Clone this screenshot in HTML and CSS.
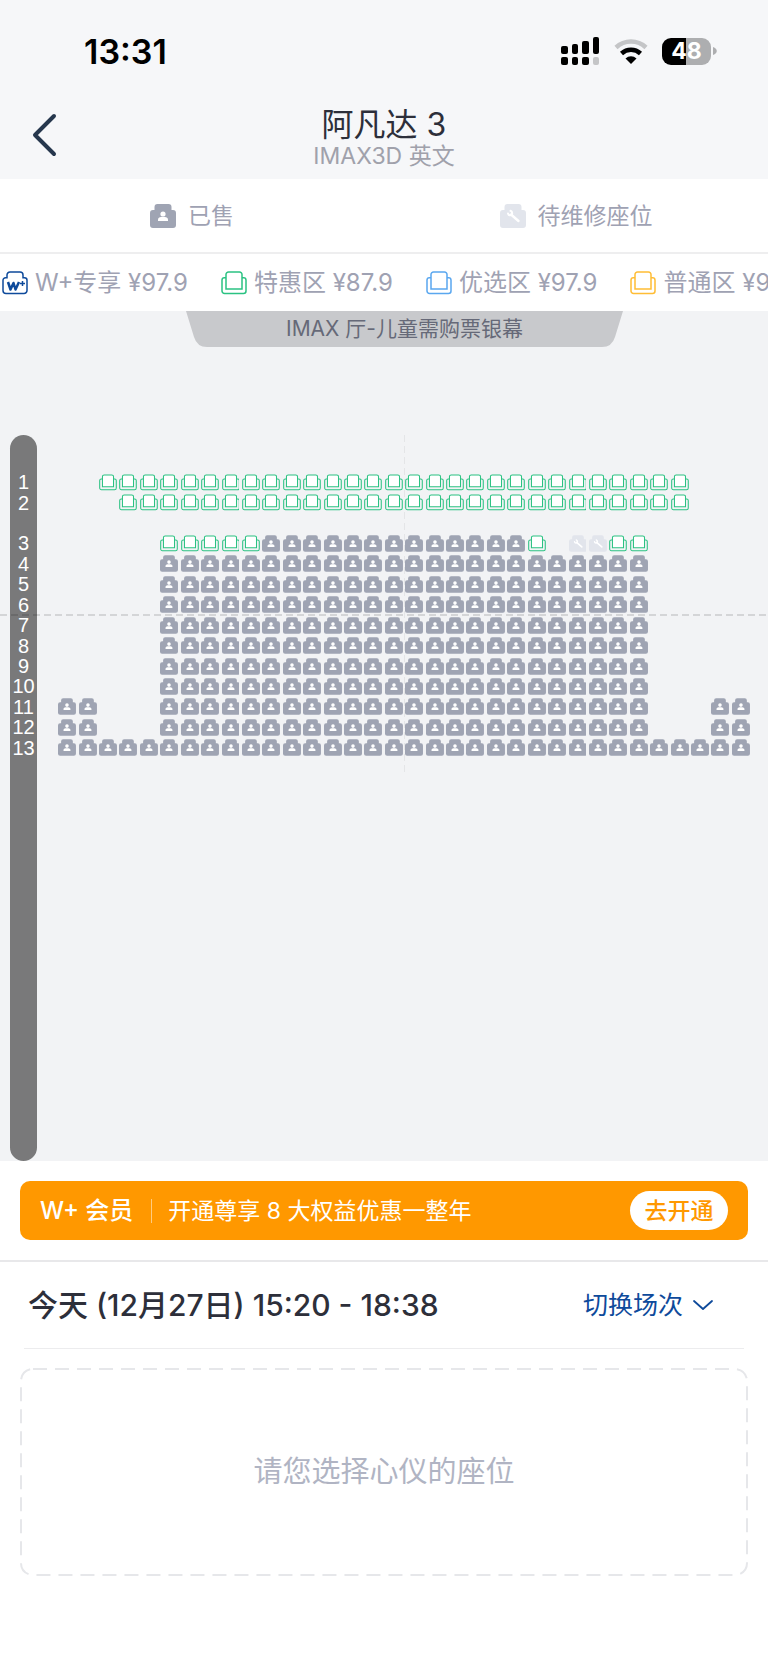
FILE: index.html
```
<!DOCTYPE html>
<html lang="zh-CN">
<head>
    <meta charset="UTF-8">
    <meta name="viewport" content="width=device-width, initial-scale=1">
    <title>选座</title>
    <link rel="stylesheet" href="styles.css">
</head>
<body>
<svg class="sprite" aria-hidden="true">
    <symbol id="seat-sold" viewBox="0 0 26 24">
        <path fill="currentColor" d="M7.500 0h11a3 3 0 0 1 3 3v3H23a3 3 0 0 1 3 3v12a3 3 0 0 1-3 3H3a3 3 0 0 1-3-3V9a3 3 0 0 1 3-3h1.500V3a3 3 0 0 1 3-3z"/>
        <circle cx="13" cy="10" r="2.600" fill="#fff"/>
        <path fill="#fff" d="M8 17v-1.500c0-1.500 1.500-2.200 3-2.500h4c1.500.3 3 1 3 2.500V17z"/>
    </symbol>
    <symbol id="seat-repair" viewBox="0 0 26 24">
        <path fill="currentColor" d="M7.500 0h11a3 3 0 0 1 3 3v3H23a3 3 0 0 1 3 3v12a3 3 0 0 1-3 3H3a3 3 0 0 1-3-3V9a3 3 0 0 1 3-3h1.500V3a3 3 0 0 1 3-3z"/>
        <path fill="none" stroke="#fff" stroke-width="2.400" stroke-linecap="round" d="M11 10.500l7.500 6.500"/>
        <path fill="none" stroke="#fff" stroke-width="2" stroke-linecap="round" d="M8 9.500c.5 2.500 4 2.500 4.200-.3 0-1.200-.7-2-1.700-2.400"/>
    </symbol>
    <symbol id="seat-free" viewBox="0 0 26 24">
        <path fill="none" stroke="currentColor" stroke-width="1.500" d="M5 6.800H3.300A2.300 2.300 0 0 0 1 9v11a2.500 2.500 0 0 0 2.500 2.500h19A2.500 2.500 0 0 0 25 20V9a2.300 2.300 0 0 0-2.300-2.200H21"/>
        <path fill="#fff" stroke="currentColor" stroke-width="1.500" d="M5 18V3.500A2.500 2.500 0 0 1 7.500 1h11A2.500 2.500 0 0 1 21 3.500V18z"/>
    </symbol>
    <symbol id="seat-wplus" viewBox="0 0 26 24">
        <path fill="#fff" stroke="currentColor" stroke-width="1.500" d="M5 6.800V4a3 3 0 0 1 3-3h10a3 3 0 0 1 3 3v2.800h1.500A2.500 2.500 0 0 1 25 9.300v10.200a3 3 0 0 1-3 3H4a3 3 0 0 1-3-3V9.300a2.500 2.500 0 0 1 2.500-2.500z"/>
        <path fill="none" stroke="currentColor" stroke-width="2.500" stroke-linejoin="round" d="M6 11l2.500 7.500 3-6.500 2 6.500 3.500-7.500"/>
        <path fill="none" stroke="currentColor" stroke-width="1.500" d="M18 12.500h5M20.500 10v5"/>
    </symbol>
</svg>

<header class="header">
    <div class="status">
        <span class="time">13:31</span>
        <div class="status-icons">
            <svg width="39" height="28" viewBox="0 0 39 28">
                <rect x="0" y="9" width="7" height="8" rx="2"/>
                <rect x="11" y="7" width="6" height="10" rx="2"/>
                <rect x="21" y="4" width="7" height="13" rx="2"/>
                <rect x="32" y="0" width="6" height="17" rx="2"/>
                <rect x="0" y="20" width="7" height="8" rx="2"/>
                <rect x="11" y="20" width="6" height="8" rx="2"/>
                <rect x="21" y="20" width="7" height="8" rx="2"/>
                <rect x="32" y="20" width="6" height="8" rx="2" fill="#c4c5c7"/>
            </svg>
            <svg width="34" height="26" viewBox="0 0 34 26">
                <path fill="none" stroke="#c4c5c7" stroke-width="4.500" d="M2 9.500a22 22 0 0 1 30 0"/>
                <path fill="none" stroke="#000" stroke-width="4.500" d="M7.500 15.500a14 14 0 0 1 19 0"/>
                <path d="M17 26l-5.500-5.500a8 8 0 0 1 11 0z"/>
            </svg>
            <div class="battery">
                <span class="battery-level">48</span>
                <svg width="4" height="8" viewBox="0 0 4 8"><path fill="#adaeb0" d="M0 0c5 1.500 5 6.500 0 8z"/></svg>
            </div>
        </div>
    </div>
    <div class="nav">
        <button class="back" aria-label="返回">
            <svg width="26" height="44" viewBox="0 0 26 44"><path fill="none" stroke="#26374d" stroke-width="4" stroke-linecap="round" stroke-linejoin="round" d="M23 3L4 22l19 19"/></svg>
        </button>
        <div class="film">
            <h1>阿凡达 3</h1>
            <p>IMAX3D 英文</p>
        </div>
    </div>
</header>

<div class="states">
    <span class="state"><svg class="icon sold"><use href="#seat-sold"/></svg>已售</span>
    <span class="state"><svg class="icon repair"><use href="#seat-repair"/></svg>待维修座位</span>
</div>

<div class="zones">
    <span class="zone"><svg class="icon wplus"><use href="#seat-wplus"/></svg>W+专享 ¥97.9</span>
    <span class="zone"><svg class="icon cheap"><use href="#seat-free"/></svg>特惠区 ¥87.9</span>
    <span class="zone"><svg class="icon best"><use href="#seat-free"/></svg>优选区 ¥97.9</span>
    <span class="zone"><svg class="icon normal"><use href="#seat-free"/></svg>普通区 ¥97.9</span>
</div>

<main class="hall">
    <div class="screen">
        <svg class="screen-shape" viewBox="0 0 437 36" preserveAspectRatio="none"><path fill="#c8c9cc" d="M0 0h437l-8 26q-3 10-13 10H21q-10 0-13-10z"/></svg>
        <span>IMAX 厅-儿童需购票银幕</span>
    </div>
    <div class="map">
        <div class="rows" id="rows"></div>
        <div class="seats" id="seats"></div>
    </div>
    <div class="line-h"></div>
</main>

<section class="vip">
    <div class="banner">
        <strong>W+ 会员</strong>
        <span class="banner-text">开通尊享 8 大权益优惠一整年</span>
        <button class="open">去开通</button>
    </div>
</section>

<section class="session">
    <div class="session-head">
        <h2>今天 (12月27日) 15:20 - 18:38</h2>
        <button class="switch">切换场次
            <svg width="20" height="12" viewBox="0 0 20 12"><path fill="none" stroke="currentColor" stroke-width="1.800" stroke-linecap="round" stroke-linejoin="round" d="M1 2l9 8 9-8"/></svg>
        </button>
    </div>
    <div class="empty">
        <svg class="empty-frame" aria-hidden="true"><rect class="empty-line" x="1" y="1" rx="12"/></svg>
        请您选择心仪的座位
    </div>
</section>

<script src="seats.js"></script>
</body>
</html>
```
FILE: styles.css
```
*{
    box-sizing:border-box;
}
body{
    margin:0;
    background:#fff;
    color:#2d2f3a;
    font-family:Inter,"Noto Sans CJK SC",sans-serif;
}
h1,h2,p{
    margin:0;
    font-weight:400;
}
button{
    padding:0;
    border:0;
    background:none;
    font-family:inherit;
}
svg{
    display:block;
    flex:none;
}
.sprite{
    position:absolute;
    width:0;
    height:0;
}

/* header */
.header{
    background:#f6f7f9;
    padding-bottom:9px;
}
.status{
    display:flex;
    justify-content:space-between;
    align-items:center;
    height:108px;
    padding:0 51px 6px 84px;
}
.time{
    color:#000;
    font-size:34px;
    font-weight:600;
}
.status-icons{
    display:flex;
    align-items:center;
    gap:14px;
}
.battery{
    display:flex;
    align-items:center;
    gap:2px;
}
.battery-level{
    width:49px;
    border-radius:9px;
    background:linear-gradient(90deg,#000 49%,#adaeb0 49%);
    color:#fff;
    font-size:23px;
    font-weight:700;
    line-height:27px;
    text-align:center;
}
.nav{
    display:grid;
    grid-template-columns:57px 1fr 57px;
    align-items:center;
}
.back{
    justify-self:end;
    padding-bottom:8px;
}
.film{
    text-align:center;
}
.film h1{
    font-size:32px;
    line-height:34px;
}
.film p{
    color:#a0a1ab;
    font-size:23px;
    line-height:28px;
}

/* legend */
.states{
    display:grid;
    grid-template-columns:1fr 1fr;
    justify-items:center;
    height:75px;
    border-bottom:2px solid #eeeeef;
}
.state,.zone{
    display:flex;
    align-items:center;
    gap:12px;
    color:#9fa2b3;
    font-size:23px;
    line-height:24px;
    white-space:nowrap;
}
.zones{
    display:flex;
    gap:33px;
    height:57px;
    padding-left:2px;
    overflow:hidden;
}
.zone{
    gap:7px;
    font-size:24px;
}
.icon{
    width:26px;
    height:24px;
}
.sold{
    color:#9fa4b3;
}
.repair{
    color:#e2e5ec;
}
.wplus{
    color:#0e4a9b;
}
.cheap{
    color:#2bc282;
}
.best{
    color:#5aa7ef;
}
.normal{
    color:#ffbd35;
}

/* seat map */
.hall{
    position:relative;
    background:#f2f3f5;
}
.screen{
    display:grid;
    height:36px;
    margin:0 145px 0 186px;
    place-items:center;
    color:#666978;
    font-size:21px;
    line-height:36px;
}
.screen-shape,.screen span{
    grid-area:1/1;
}
.screen-shape{
    width:100%;
    height:36px;
}
.map{
    position:relative;
    z-index:1;
    display:flex;
    gap:20px;
    padding:88px 17px 0 10px;
}
.rows{
    width:27px;
    height:726px;
    padding-top:37px;
    border-radius:14px;
    background:rgba(0,0,0,.5);
    color:#fff;
    font-family:"Liberation Sans",sans-serif;
    font-size:20px;
    line-height:20px;
    text-align:center;
}
.row-list{
    display:grid;
    grid-template-rows:repeat(14,1fr);
    align-items:center;
    height:286px;
}
.seats{
    display:grid;
    flex:1;
    grid-template-columns:repeat(34,1fr);
    grid-template-rows:repeat(14,1fr);
    height:337px;
    padding:37px 0 14px;
    background:repeating-linear-gradient(#e4e5e7 0 7px,transparent 7px 11px) 50% 0/1px 100% no-repeat;
}
.seat{
    display:grid;
    place-items:center;
}
.seat svg{
    width:88%;
    height:17px;
}
.line-h{
    position:absolute;
    top:303px;
    left:0;
    right:0;
    height:2px;
    background:repeating-linear-gradient(90deg,#d4d5d7 0 7px,transparent 7px 11px);
}

/* member banner */
.vip{
    padding:20px;
    border-bottom:2px solid #e8e8ea;
}
.banner{
    display:flex;
    align-items:center;
    height:59px;
    padding:0 20px;
    border-radius:10px;
    background:#ff9800;
    color:#fff;
    font-size:23px;
    line-height:28px;
}
.banner strong{
    padding-right:18px;
    font-size:24px;
    font-weight:500;
}
.banner-text{
    flex:1;
    padding-left:17px;
    background:linear-gradient(#ffcb80,#ffcb80) 0 50%/1px 24px no-repeat;
}
.open{
    width:98px;
    height:39px;
    border-radius:20px;
    background:#fff;
    color:#ff9800;
    font-size:23px;
    font-weight:500;
    line-height:28px;
}

/* session */
.session{
    padding:0 20px 88px;
}
.session-head{
    display:flex;
    justify-content:space-between;
    align-items:center;
    height:87px;
    margin:0 4px 19px;
    padding:0 31px 0 4px;
    border-bottom:1px solid #ececee;
}
.session h2{
    font-size:30px;
    font-weight:500;
    line-height:36px;
}
.switch{
    display:flex;
    align-items:center;
    gap:10px;
    color:#0e4a9b;
    font-size:25px;
    line-height:36px;
}
.empty{
    position:relative;
    display:grid;
    place-items:center;
    height:208px;
    color:#b0b4c3;
    font-size:29px;
    line-height:36px;
}
.empty-frame{
    position:absolute;
    width:100%;
    height:100%;
}
.empty-line{
    width:calc(100% - 2px);
    height:calc(100% - 2px);
    fill:none;
    stroke:#e6e7ea;
    stroke-width:2px;
    stroke-dasharray:14 8;
}
```
FILE: seats.js
```
// o = free, x = sold, r = under repair, . = aisle
var plan = [
    "..ooooooooooooooooooooooooooooo...",
    "...oooooooooooooooooooooooooooo...",
    "",
    ".....oooooxxxxxxxxxxxxxo.rroo.....",
    ".....xxxxxxxxxxxxxxxxxxxxxxxx.....",
    ".....xxxxxxxxxxxxxxxxxxxxxxxx.....",
    ".....xxxxxxxxxxxxxxxxxxxxxxxx.....",
    ".....xxxxxxxxxxxxxxxxxxxxxxxx.....",
    ".....xxxxxxxxxxxxxxxxxxxxxxxx.....",
    ".....xxxxxxxxxxxxxxxxxxxxxxxx.....",
    ".....xxxxxxxxxxxxxxxxxxxxxxxx.....",
    "xx...xxxxxxxxxxxxxxxxxxxxxxxx...xx",
    "xx...xxxxxxxxxxxxxxxxxxxxxxxx...xx",
    "xxxxxxxxxxxxxxxxxxxxxxxxxxxxxxxxxx"
];
var kinds = {
    o: ["cheap", "seat-free"],
    x: ["sold", "seat-sold"],
    r: ["repair", "seat-repair"]
};
var seats = "";
var labels = "";
var number = 0;

plan.forEach(function (line, i) {
    if (line) {
        number++;
    }
    labels += "<span>" + (line ? number : "") + "</span>";
    for (var col = 0; col < 34; col++) {
        var kind = kinds[line[col]];
        if (!kind) {
            seats += "<span></span>";
            continue;
        }
        seats += '<button class="seat ' + kind[0] + '" aria-label="' + number + "排" + (col + 1) + '座"' +
            (line[col] === "o" ? "" : " disabled") + '><svg><use href="#' + kind[1] + '"/></svg></button>';
    }
});

document.getElementById("rows").innerHTML = '<div class="row-list">' + labels + "</div>";
document.getElementById("seats").innerHTML = seats;
```
